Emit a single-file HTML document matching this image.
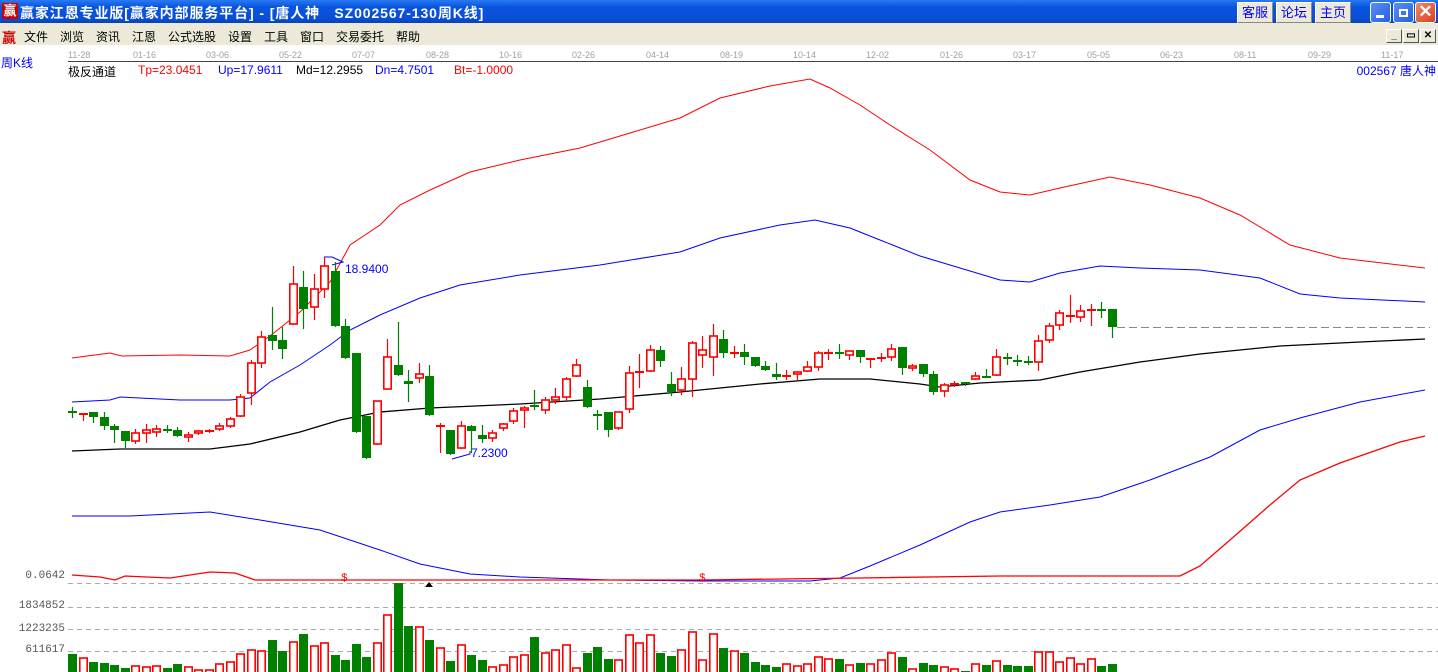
<!DOCTYPE html>
<html><head><meta charset="utf-8">
<style>
*{margin:0;padding:0;box-sizing:border-box}
body{width:1438px;height:672px;overflow:hidden;background:#fff;font-family:"Liberation Sans","Noto Sans CJK SC",sans-serif;position:relative}
.t{position:absolute;white-space:nowrap}
#title{position:absolute;left:0;top:0;width:1438px;height:23px;background:linear-gradient(#2a7af5,#0855dd 30%,#0a4fd6 80%,#0842b8)}
#menu{position:absolute;left:0;top:23px;width:1438px;height:22px;background:#ece9d8}
.btn{position:absolute;top:2px;height:21px;width:36px;background:#ece9d8;border:1px solid #fff;border-right-color:#888;border-bottom-color:#888;color:#00f;font-size:13px;text-align:center;line-height:19px}
.wb{position:absolute;top:2px;width:21px;height:21px;border:1px solid #fff;border-radius:3px;background:linear-gradient(135deg,#5a8ff8,#2460e0)}
.mdi{position:absolute;top:29px;width:16px;height:14px;background:#ece9d8;border:1px solid #fff;border-right-color:#555;border-bottom-color:#555;font-size:10px;text-align:center;line-height:11px;font-weight:bold}
.mi{position:absolute;top:28px;font-size:12px;color:#000}
.d{position:absolute;top:50px;font-size:9px;color:#a0a0a0}
.lg{position:absolute;top:63px;font-size:12px}
.ax{position:absolute;font-size:11px;color:#555;right:1373px;font-family:"Liberation Mono",monospace}
</style></head><body>
<div id="title"></div>
<div class="t" style="left:2px;top:3px;width:16px;height:16px;background:#c00;color:#fff;font-size:13px;line-height:16px;text-align:center;font-weight:bold">赢</div>
<div class="t" style="left:20px;top:3px;color:#fff;font-size:14px;font-weight:bold;letter-spacing:0.9px">赢家江恩专业版[赢家内部服务平台] - [唐人神&nbsp;&nbsp;&nbsp;SZ002567-130周K线]</div>
<div class="btn" style="left:1237px">客服</div>
<div class="btn" style="left:1276px">论坛</div>
<div class="btn" style="left:1315px">主页</div>
<div class="wb" style="left:1370px"><div style="position:absolute;left:5px;top:12px;width:8px;height:3px;background:#fff"></div></div>
<div class="wb" style="left:1393px"><div style="position:absolute;left:5px;top:6px;width:9px;height:8px;border:2px solid #fff"></div></div>
<div class="wb" style="left:1415px;background:linear-gradient(135deg,#f08a6a,#d84020);color:#fff;font-size:17px;line-height:18px;text-align:center;font-weight:bold">✕</div>
<div id="menu"></div>
<div class="t" style="left:2px;top:28px;color:#c00;font-size:14px;font-weight:bold">赢</div>
<div class="mi" style="left:24px">文件</div><div class="mi" style="left:60px">浏览</div><div class="mi" style="left:96px">资讯</div><div class="mi" style="left:132px">江恩</div><div class="mi" style="left:168px">公式选股</div><div class="mi" style="left:228px">设置</div><div class="mi" style="left:264px">工具</div><div class="mi" style="left:300px">窗口</div><div class="mi" style="left:336px">交易委托</div><div class="mi" style="left:396px">帮助</div>
<div class="mdi" style="left:1386px">_</div><div class="mdi" style="left:1403px">▭</div><div class="mdi" style="left:1420px">✕</div>
<div class="t" style="left:68px;top:61px;width:1370px;height:1px;background:#444"></div>
<div class="d" style="left:68px">11-28</div><div class="d" style="left:133px">01-16</div><div class="d" style="left:206px">03-06</div><div class="d" style="left:279px">05-22</div><div class="d" style="left:352px">07-07</div><div class="d" style="left:426px">08-28</div><div class="d" style="left:499px">10-16</div><div class="d" style="left:572px">02-26</div><div class="d" style="left:646px">04-14</div><div class="d" style="left:720px">08-19</div><div class="d" style="left:793px">10-14</div><div class="d" style="left:866px">12-02</div><div class="d" style="left:940px">01-26</div><div class="d" style="left:1013px">03-17</div><div class="d" style="left:1087px">05-05</div><div class="d" style="left:1160px">06-23</div><div class="d" style="left:1234px">08-11</div><div class="d" style="left:1308px">09-29</div><div class="d" style="left:1381px">11-17</div>
<div class="t" style="left:1px;top:54px;color:#00f;font-size:12px">周K线</div>
<div class="lg" style="left:68px;color:#000">极反通道</div>
<div class="lg" style="left:138px;color:#f00">Tp=23.0451</div>
<div class="lg" style="left:218px;color:#00f">Up=17.9611</div>
<div class="lg" style="left:296px;color:#000">Md=12.2955</div>
<div class="lg" style="left:375px;color:#00f">Dn=4.7501</div>
<div class="lg" style="left:454px;color:#f00">Bt=-1.0000</div>
<div class="t" style="right:2px;top:62px;color:#00f;font-size:12px">002567 唐人神</div>
<div class="ax" style="top:570px">0.0642</div>
<div class="ax" style="top:600px">1834852</div>
<div class="ax" style="top:623px">1223235</div>
<div class="ax" style="top:644px">611617</div>
<svg id="s" width="1438" height="672" style="position:absolute;left:0;top:0" xmlns="http://www.w3.org/2000/svg">
<g stroke="#aaa" stroke-dasharray="5,4" stroke-width="1">
<line x1="68" y1="583.5" x2="1438" y2="583.5"/><line x1="68" y1="607.5" x2="1438" y2="607.5"/><line x1="68" y1="629.5" x2="1438" y2="629.5"/><line x1="68" y1="651.5" x2="1438" y2="651.5"/>
</g>
<line x1="1117" y1="327.5" x2="1430" y2="327.5" stroke="#888" stroke-dasharray="8,4"/>
<polyline fill="none" stroke="#f00" points="72,358 110,353 122,356 180,355 230,356 250,350 270,336 300,312 330,282 350,245 380,225 400,205 430,190 470,172 520,160 580,148 620,136 680,118 720,98 770,86 810,79 830,88 860,105 890,125 930,150 970,180 1000,192 1030,195 1060,188 1110,177 1150,185 1200,198 1240,215 1290,245 1340,258 1425,268"/>
<polyline fill="none" stroke="#00f" points="72,402 110,400 120,397 180,400 230,400 250,398 270,382 300,365 330,345 350,330 380,315 420,298 460,285 520,275 600,265 680,252 720,238 780,225 815,220 850,228 880,240 920,256 960,268 1000,280 1030,282 1060,273 1100,266 1140,268 1200,270 1260,278 1300,294 1340,298 1425,302"/>
<polyline fill="none" stroke="#000" stroke-width="1.3" points="72,451 120,449 210,449 250,444 300,432 340,420 380,412 430,408 520,404 600,399 680,392 760,384 820,379 870,379 920,384 940,387 980,383 1040,380 1080,372 1140,362 1200,354 1280,346 1360,342 1425,339"/>
<polyline fill="none" stroke="#00f" points="72,516 130,516 210,512 260,520 320,530 380,550 420,564 470,574 520,577 610,580 700,581 810,581 840,578 870,566 920,545 970,522 1000,512 1050,505 1100,497 1150,480 1210,457 1260,430 1300,418 1360,402 1425,390"/>
<polyline fill="none" stroke="#f00" stroke-width="1.3" points="72,575 100,577 115,580 125,576 170,578 210,572 235,573 255,580 340,580 420,580 700,580 860,578 1000,576 1180,576 1200,566 1230,540 1270,505 1300,480 1340,463 1400,442 1425,436"/>
<text x="341" y="581" fill="#f00" font-size="11" font-family="Liberation Mono">$</text>
<text x="699" y="581" fill="#f00" font-size="11" font-family="Liberation Mono">$</text>
<polygon points="425,587 433,587 429,582" fill="#000"/>
<polyline fill="none" stroke="#00f" points="324,257 332,257 343,262 332,265"/>
<text x="345" y="273" fill="#00f" font-size="12" font-family="Liberation Sans">18.9400</text>
<polyline fill="none" stroke="#00f" points="452,459 470,454 470,451"/>
<text x="471" y="457" fill="#00f" font-size="12" font-family="Liberation Sans">7.2300</text>
<g id="c"></g>
</svg>
<script>
var C=[["g",411,413,407,417],["r",413,413,413,420],["g",412,417,412,422],["g",417,426,412,429],["g",426,430,424,442],["g",431,441,431,447],["r",433,441,429,443],["r",430,433,424,442],["r",429,432,425,436],["g",429,429,425,432],
["g",430,436,427,436],["r",435,437,432,441],["r",431,433,430,434],["r",430,430,429,432],["r",426,429,423,430],["r",419,426,417,427],["r",397,416,394,416],["r",363,393,360,404],["r",337,363,331,367],["g",335,341,307,349],
["g",340,349,327,358],["r",284,324,266,324],["g",287,309,271,328],["r",289,307,274,319],["r",266,289,257,297],["g",271,326,262,326],["g",326,358,319,358],["g",353,432,353,432],["g",416,458,416,458],["r",401,444,401,444],
["r",357,389,339,389],["g",365,375,322,375],["g",381,384,370,401],["r",374,378,363,382],["g",376,415,365,415],["r",425,425,423,452],["g",430,454,430,454],["r",426,448,421,448],["g",426,431,425,452],["g",435,439,425,442],
["r",433,438,430,441],["r",424,428,423,430],["r",411,421,408,423],["r",408,410,406,427],["g",405,407,390,409],["r",400,410,397,413],["r",397,400,388,403],["r",379,397,377,400],["r",365,376,359,376],["g",387,407,380,407],
["g",414,414,410,429],["g",412,430,412,436],["r",412,428,412,429],["r",373,409,366,412],["r",371,372,354,387],["r",350,371,345,371],["g",350,361,346,366],["g",384,392,372,395],["r",379,390,367,394],["r",343,379,341,396],
["r",350,355,336,367],["r",336,357,324,375],["g",339,353,330,357],["r",352,352,346,357],["g",352,357,344,364],["g",357,366,357,366],["g",366,370,361,370],["g",374,377,363,379],["r",375,375,370,379],["r",372,374,371,380],
["r",367,371,361,371],["r",353,367,351,370],["r",352,352,349,359],["g",352,354,344,358],["r",351,355,351,359],["g",350,357,350,362],["r",358,358,358,367],["r",357,357,353,361],["r",349,357,344,360],["g",347,368,347,374],
["r",366,368,364,370],["g",364,374,364,376],["g",374,392,371,394],["r",385,391,383,396],["r",383,383,381,386],["g",382,383,382,385],["r",376,379,372,379],["g",376,376,369,376],["r",357,375,349,375],["g",357,359,353,364],
["g",360,360,355,365],["g",361,361,356,364],["r",341,362,335,370],["r",326,340,323,342],["r",313,325,310,329],["r",315,315,295,322],["r",311,317,305,321],["r",309,310,304,325],["g",309,310,302,317],["g",309,327,309,337]];
var V=[654,658,662,663,665,668,666,667,666,668,664,667,670,670,664,662,654,650,651,640,651,642,634,646,643,655,660,644,657,643,615,583,626,627,640,648,661,645,655,660,667,665,657,655,637,653,650,645,668,653,647,659,660,635,643,635,653,656,650,632,660,634,648,651,653,662,665,667,664,666,664,657,659,659,665,663,664,660,653,657,669,663,665,667,669,671,664,665,661,665,666,666,652,652,662,658,664,659,666,664];
var h="";
for(var i=0;i<C.length;i++){var c=C[i],x=Math.round(72+10.505*i),col=c[0]=="g"?"#008000":"#f00";
h+='<line x1="'+(x+.5)+'" y1="'+c[3]+'" x2="'+(x+.5)+'" y2="'+(c[4]+1)+'" stroke="'+col+'" stroke-width="1.2"/>';
if(c[2]-c[1]<2){h+='<rect x="'+(x-4)+'" y="'+c[1]+'" width="9" height="2" fill="'+col+'"/>';}
else if(c[0]=="g"){h+='<rect x="'+(x-4)+'" y="'+c[1]+'" width="9" height="'+(c[2]-c[1])+'" fill="'+col+'"/>';}
else{h+='<rect x="'+(x-3.2)+'" y="'+c[1]+'" width="7.4" height="'+(c[2]-c[1])+'" fill="#fff" stroke="'+col+'" stroke-width="1.6"/>';}
var v=V[i];
if(c[0]=="g"){h+='<rect x="'+(x-4)+'" y="'+v+'" width="9" height="'+(673-v)+'" fill="#008000"/>';}
else{h+='<rect x="'+(x-3.2)+'" y="'+v+'" width="7.4" height="'+(674-v)+'" fill="#fff" stroke="#f00" stroke-width="1.6"/>';}
}
document.getElementById("c").innerHTML=h;
</script>
</body></html>
